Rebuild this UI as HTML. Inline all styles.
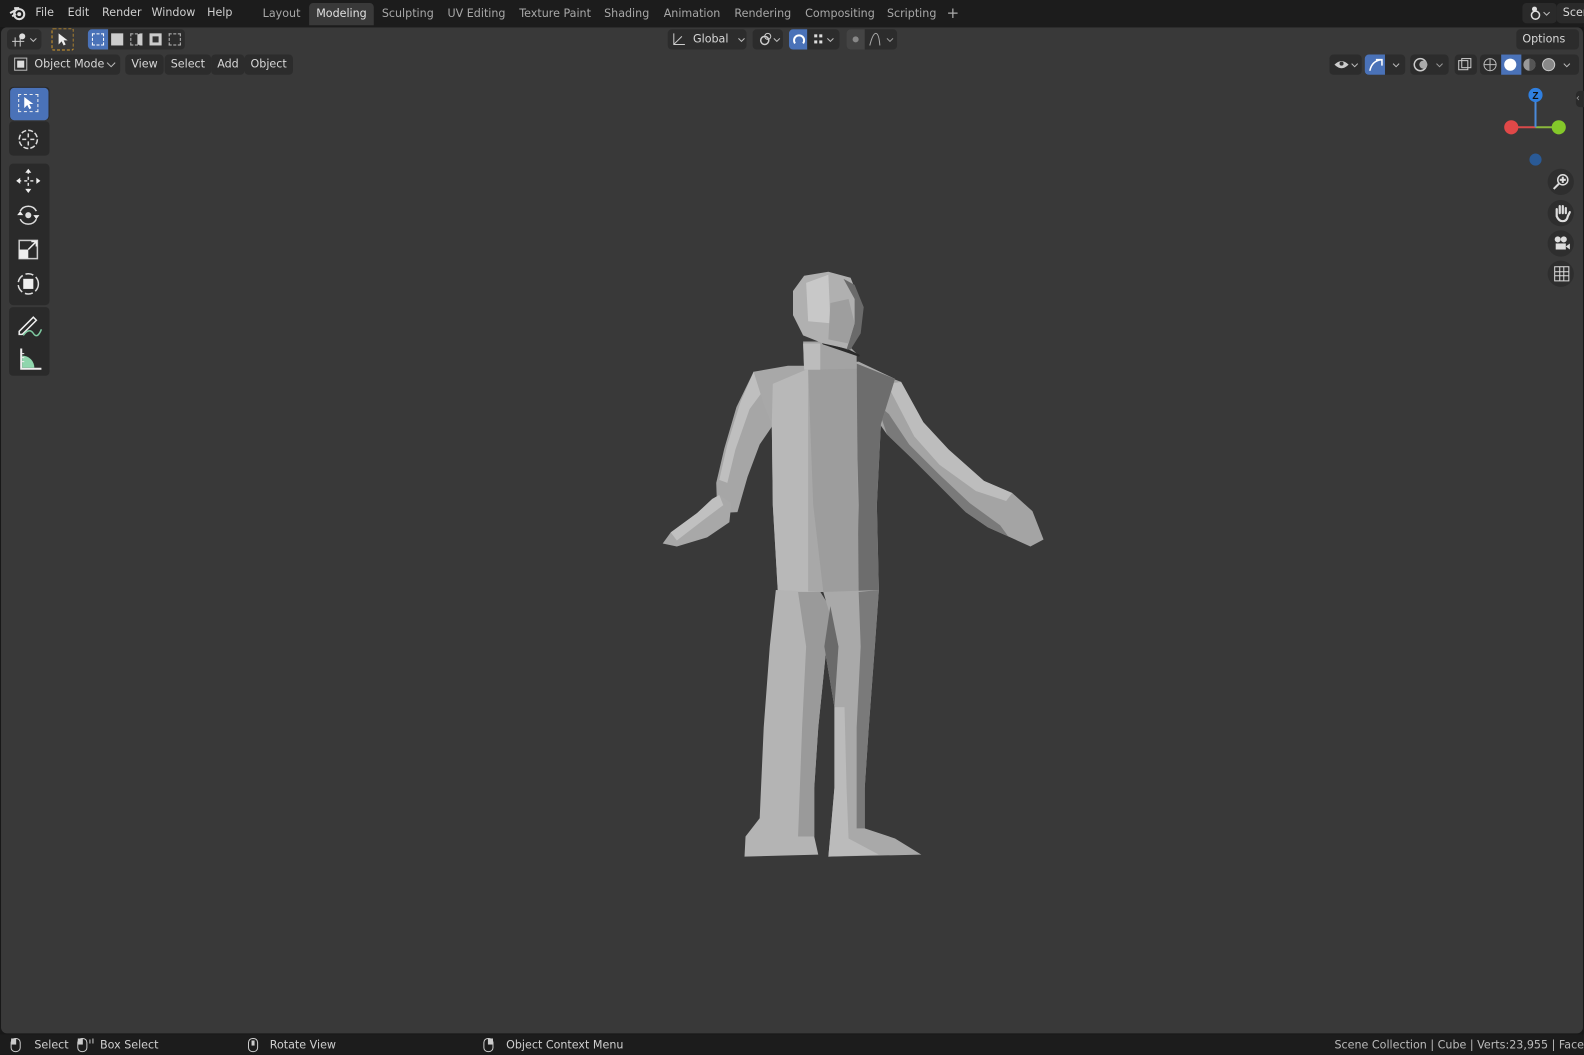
<!DOCTYPE html>
<html><head><meta charset="utf-8"><style>
*{margin:0;padding:0;box-sizing:border-box}
html,body{width:1584px;height:1054px;overflow:hidden;background:#181818}
#w{position:absolute;left:0;top:0;width:1568px;height:1044px;transform:scale(1.0102);transform-origin:0 0;font-family:"DejaVu Sans","Liberation Sans",sans-serif;font-size:11px;color:#cfcfcf}
.a{position:absolute;white-space:nowrap}
#top{left:0;top:0;width:1568px;height:27px;background:#1c1c1c}
#vp{left:1px;top:27px;width:1566px;height:996px;background:#393939;border-radius:6px}
#stat{left:0;top:1024px;width:1568px;height:20px;background:#1c1c1c}
.tab{position:absolute;top:3px;height:22px;line-height:22px;padding:0 7px;color:#a8a8a8;font-size:11px;border-radius:4px 4px 0 0}
.tab.on{background:#393939;color:#e0e0e0}
.btn{position:absolute;height:20px;line-height:20px;background:#2c2c2c;border-radius:4px;color:#d8d8d8;padding:0 6px}
.tb{position:absolute;left:9px;width:40px;background:#2a2a2a;border-radius:4px}
.ti{position:absolute;left:10px;width:38px;height:32px}
.nav{position:absolute;left:1532px;width:26px;height:26px;border-radius:13px;background:#2e2e2e}
</style></head><body><div id="w">
<div class="a" id="vp"></div>
<div class="a" id="top"></div>
<svg class="a" style="left:9px;top:5px" width="18" height="16" viewBox="0 0 18 16"><circle cx="10" cy="9" r="5" fill="none" stroke="#ddd" stroke-width="2"/><circle cx="10" cy="9" r="2" fill="#ddd"/><path d="M1 8 L8 4 M3 11 L7 9 M5 3 L10 3" stroke="#ddd" stroke-width="2"/></svg>
<div class="a" style="left:35px;top:6px">File</div>
<div class="a" style="left:67px;top:6px">Edit</div>
<div class="a" style="left:101px;top:6px">Render</div>
<div class="a" style="left:150px;top:6px">Window</div>
<div class="a" style="left:205px;top:6px">Help</div>
<div class="tab" style="left:253px">Layout</div>
<div class="tab on" style="left:306px">Modeling</div>
<div class="tab" style="left:371px">Sculpting</div>
<div class="tab" style="left:436px">UV Editing</div>
<div class="tab" style="left:507px">Texture Paint</div>
<div class="tab" style="left:591px">Shading</div>
<div class="tab" style="left:650px">Animation</div>
<div class="tab" style="left:720px">Rendering</div>
<div class="tab" style="left:790px">Compositing</div>
<div class="tab" style="left:871px">Scripting</div>
<div class="a" style="left:937px;top:4px;font-size:15px;color:#aaa">+</div>
<div class="btn" style="left:1507px;top:3px;width:34px;background:#2a2a2a"></div>
<svg class="a" style="left:1512px;top:5px" width="24" height="16"><circle cx="8" cy="10" r="4" fill="none" stroke="#ddd" stroke-width="1.5"/><circle cx="7" cy="4" r="2.5" fill="#ddd"/><path d="M16 7l3 3 3-3" stroke="#bbb" fill="none"/></svg>
<div class="btn" style="left:1541px;top:3px;width:30px;background:#2a2a2a">Scen</div>
<div class="btn" style="left:7px;top:29px;width:34px"></div>
<svg class="a" style="left:10px;top:31px" width="30" height="16"><path d="M2 10h12M5 6v9M10 6v9" stroke="#ccc"/><circle cx="12" cy="5" r="3" fill="#ddd"/><path d="M20 7l3 3 3-3" stroke="#bbb" fill="none"/></svg>
<div class="a" style="left:51px;top:28px;width:22px;height:22px;border:1px dashed #d59a2a;border-radius:2px"></div>
<svg class="a" style="left:56px;top:32px" width="12" height="14"><path d="M2 1v11l3-3 2 4 2-1-2-4h4z" fill="#eee"/></svg>
<div class="a" style="left:87px;top:29px;width:96px;height:20px;background:#2c2c2c;border-radius:4px"></div>
<div class="a" style="left:87px;top:29px;width:20px;height:20px;background:#4a72b8;border-radius:4px 0 0 4px"></div>
<div class="a" style="left:91px;top:33px;width:12px;height:12px;border:1px dashed #fff"></div>
<div class="a" style="left:110px;top:33px;width:12px;height:12px;background:#ccc"></div>
<div class="a" style="left:129px;top:33px;width:12px;height:12px;border:1px dashed #bbb;border-right:5px solid #ccc"></div>
<div class="a" style="left:148px;top:33px;width:12px;height:12px;border:3px solid #ccc;background:#333"></div>
<div class="a" style="left:167px;top:33px;width:12px;height:12px;border:1px dashed #bbb"></div>
<div class="btn" style="left:661px;top:29px;width:78px;padding-left:25px">Global</div>
<svg class="a" style="left:664px;top:31px" width="76" height="16"><path d="M3 2v11h11M3 13l8-8" stroke="#ccc" fill="none"/><path d="M67 7l3 3 3-3" stroke="#bbb" fill="none"/></svg>
<div class="btn" style="left:745px;top:29px;width:30px"></div>
<svg class="a" style="left:749px;top:31px" width="26" height="16"><circle cx="8" cy="9" r="4" fill="none" stroke="#ccc" stroke-width="1.5"/><circle cx="11" cy="5" r="3" fill="none" stroke="#ccc"/><path d="M17 7l3 3 3-3" stroke="#bbb" fill="none"/></svg>
<div class="btn" style="left:781px;top:29px;width:50px"></div>
<div class="a" style="left:781px;top:29px;width:18px;height:20px;background:#4a72b8;border-radius:4px 0 0 4px"></div>
<svg class="a" style="left:783px;top:31px" width="48" height="16"><path d="M4 12a5 5 0 1 1 8 0" stroke="#fff" stroke-width="2" fill="none"/><rect x="23" y="3" width="3" height="3" fill="#ddd"/><rect x="28" y="3" width="3" height="3" fill="#ddd"/><rect x="23" y="9" width="3" height="3" fill="#ddd"/><rect x="28" y="9" width="3" height="3" fill="#ddd"/><path d="M36 7l3 3 3-3" stroke="#bbb" fill="none"/></svg>
<div class="btn" style="left:838px;top:29px;width:50px"></div>
<div class="a" style="left:838px;top:29px;width:18px;height:20px;background:#444;border-radius:4px 0 0 4px"></div>
<svg class="a" style="left:840px;top:31px" width="48" height="16"><circle cx="7" cy="8" r="3" fill="#888"/><path d="M21 14q3-12 6-12t4 12" stroke="#aaa" fill="none"/><path d="M38 7l3 3 3-3" stroke="#999" fill="none"/></svg>
<div class="btn" style="left:1501px;top:29px;width:62px">Options ⌄</div>
<div class="btn" style="left:8px;top:54px;width:111px;padding-left:26px">Object Mode</div>
<div class="a" style="left:14px;top:57px;width:13px;height:13px;border:1px solid #bbb"></div><div class="a" style="left:17px;top:60px;width:7px;height:7px;background:#ddd"></div>
<svg class="a" style="left:104px;top:58px" width="12" height="12"><path d="M2 4l4 4 4-4" stroke="#bbb" fill="none"/></svg>
<div class="btn" style="left:124px;top:54px">View</div>
<div class="btn" style="left:163px;top:54px">Select</div>
<div class="btn" style="left:209px;top:54px">Add</div>
<div class="btn" style="left:242px;top:54px">Object</div>
<div class="btn" style="left:1316px;top:54px;width:32px"></div>
<svg class="a" style="left:1320px;top:56px" width="28" height="16"><path d="M1 8q7-7 14 0q-7 7-14 0z" fill="#ccc"/><circle cx="8" cy="7" r="2" fill="#333"/><path d="M18 7l3 3 3-3" stroke="#bbb" fill="none"/></svg>
<div class="btn" style="left:1351px;top:54px;width:40px"></div>
<div class="a" style="left:1351px;top:54px;width:20px;height:20px;background:#4a72b8;border-radius:4px 0 0 4px"></div>
<svg class="a" style="left:1353px;top:56px" width="38" height="16"><path d="M3 14q2-10 12-11M9 3h6v6" stroke="#fff" fill="none" stroke-width="1.5"/><path d="M26 7l3 3 3-3" stroke="#bbb" fill="none"/></svg>
<div class="btn" style="left:1396px;top:54px;width:38px"></div>
<svg class="a" style="left:1398px;top:56px" width="36" height="16"><circle cx="8" cy="8" r="6" fill="none" stroke="#ccc" stroke-width="1.5"/><circle cx="11" cy="8" r="4" fill="#aaa"/><path d="M24 7l3 3 3-3" stroke="#999" fill="none"/></svg>
<div class="btn" style="left:1440px;top:54px;width:22px"></div>
<svg class="a" style="left:1443px;top:57px" width="16" height="14"><rect x="1" y="3" width="9" height="9" fill="none" stroke="#ccc"/><rect x="4" y="1" width="9" height="9" fill="none" stroke="#ccc"/></svg>
<div class="btn" style="left:1465px;top:54px;width:98px"></div>
<div class="a" style="left:1486px;top:54px;width:20px;height:20px;background:#4a72b8"></div>
<svg class="a" style="left:1466px;top:56px" width="98" height="16"><circle cx="9" cy="8" r="6" fill="none" stroke="#bbb"/><path d="M3 8h12M9 2v12" stroke="#bbb"/><circle cx="29" cy="8" r="6" fill="#fff"/><circle cx="48" cy="8" r="6" fill="#999"/><path d="M48 2a6 6 0 0 1 0 12z" fill="#555"/><circle cx="67" cy="8" r="6" fill="#888" stroke="#ccc"/><path d="M82 7l3 3 3-3" stroke="#bbb" fill="none"/></svg>
<div class="tb" style="top:86px;height:33px"></div>
<div class="ti" style="top:87px;background:#4a72b8;border-radius:4px"></div>
<div class="a" style="left:18px;top:93px;width:20px;height:18px;border:1px dashed #eee"></div>
<svg class="a" style="left:22px;top:95px" width="12" height="14"><path d="M2 1v11l3-3 2 4 2-1-2-4h4z" fill="#fff"/></svg>
<div class="tb" style="top:120px;height:34px"></div>
<svg class="a" style="left:16px;top:126px" width="24" height="24"><circle cx="12" cy="12" r="9" fill="none" stroke="#ddd" stroke-width="1.5" stroke-dasharray="5 2"/><path d="M12 6v4M12 14v4M6 12h4M14 12h4" stroke="#ddd" stroke-width="1.5"/></svg>
<div class="tb" style="top:162px;height:140px"></div>
<svg class="a" style="left:15px;top:166px" width="26" height="26"><path d="M13 3v20M3 13h20" stroke="#ddd" stroke-width="1.5" stroke-dasharray="3 3"/><path d="M13 1l-3 4h6zM13 25l-3-4h6zM1 13l4-3v6zM25 13l-4-3v6z" fill="#eee"/></svg>
<svg class="a" style="left:15px;top:200px" width="26" height="26"><path d="M5 9a9 9 0 0 1 16 0M21 17a9 9 0 0 1-16 0" stroke="#ddd" stroke-width="1.5" fill="none"/><circle cx="13" cy="13" r="3" fill="#ddd"/><path d="M2 13l3-4 3 4zM24 13l-3 4-3-4z" fill="#eee"/></svg>
<svg class="a" style="left:15px;top:234px" width="26" height="26"><rect x="4" y="4" width="18" height="18" fill="none" stroke="#ccc" stroke-width="1.5"/><rect x="4" y="13" width="9" height="9" fill="#eee"/><path d="M13 13l8-8M16 5h5v5" stroke="#eee" stroke-width="1.5" fill="none"/></svg>
<svg class="a" style="left:15px;top:268px" width="26" height="26"><circle cx="13" cy="13" r="10" fill="none" stroke="#ddd" stroke-width="1.5" stroke-dasharray="8 3"/><rect x="8" y="8" width="10" height="10" fill="#eee"/></svg>
<div class="tb" style="top:304px;height:68px"></div>
<svg class="a" style="left:15px;top:308px" width="28" height="26"><path d="M4 20L18 6l3 3L7 23H4z" fill="none" stroke="#eee" stroke-width="1.5"/><path d="M8 24q6-8 10-2t8-4" stroke="#7ec9a0" fill="none" stroke-width="1.5"/></svg>
<svg class="a" style="left:15px;top:342px" width="28" height="26"><path d="M6 3v20h20" stroke="#eee" stroke-width="2" fill="none"/><path d="M7 22V10a12 12 0 0 1 12 12z" fill="#8fd6ad"/><path d="M6 8h3M6 12h3M6 16h3" stroke="#eee"/></svg>
<svg class="a" style="left:1480px;top:80px" width="88" height="90"><path d="M16 46h24" stroke="#d94a4a" stroke-width="2"/><path d="M40 46h22" stroke="#8ab83c" stroke-width="2"/><path d="M40 14v32" stroke="#4a8ad9" stroke-width="2"/><circle cx="40" cy="14" r="7" fill="#2f7fe0"/><text x="40" y="18" fill="#111" font-size="10" text-anchor="middle" font-weight="bold" font-family="Liberation Sans">Z</text><circle cx="16" cy="46" r="7" fill="#e04848"/><circle cx="63" cy="46" r="7" fill="#84c82a"/><circle cx="40" cy="78" r="6" fill="#2a5a96"/></svg>
<div class="a" style="left:1560px;top:90px;width:10px;height:16px;background:#2a2a2a;border-radius:4px 0 0 4px;color:#999;font-size:10px;line-height:16px">‹</div>
<div class="nav" style="top:167px"></div><svg class="a" style="left:1536px;top:171px" width="18" height="18"><circle cx="11" cy="7" r="5" fill="none" stroke="#ddd" stroke-width="1.5"/><path d="M11 4v6M8 7h6M7 11l-5 5" stroke="#ddd" stroke-width="2"/></svg>
<div class="nav" style="top:198px"></div><svg class="a" style="left:1537px;top:202px" width="18" height="18"><path d="M4 9V5M7 9V2M10 9V2M13 9V4M4 8v4q2 5 6 5t5-5l2-4" stroke="#ddd" stroke-width="2.2" fill="none" stroke-linecap="round"/></svg>
<div class="nav" style="top:228px"></div><svg class="a" style="left:1537px;top:232px" width="18" height="18"><circle cx="5" cy="5" r="3" fill="#ddd"/><circle cx="11" cy="5" r="3" fill="#ddd"/><rect x="3" y="9" width="10" height="6" fill="#ddd"/><path d="M13 12l4-3v6z" fill="#ddd"/></svg>
<div class="nav" style="top:258px"></div><svg class="a" style="left:1537px;top:262px" width="18" height="18"><path d="M2 2h14v14H2zM2 7h14M2 11h14M7 2v14M11 2v14" stroke="#ddd" fill="none"/></svg>
<svg class="a" style="left:0;top:0" width="1568" height="1044">
<g stroke-linejoin="round">
<polygon points="746,368 772,376 778,402 752,440 740,472 730,507 710,508 709,478 717,444 729,403" fill="#a6a6a6"/>
<polygon points="746,368 733,398 720,440 712,475 720,478 728,445 742,405 762,378" fill="#bfbfbf"/>
<polygon points="712,490 724,498 722,517 700,532 670,541 656,538 664,527 690,508 705,494" fill="#a8a8a8"/>
<polygon points="664,527 690,508 705,494 712,490 716,500 696,515 670,535" fill="#c0c0c0"/>
<polygon points="866,368 892,378 914,418 939,445 974,476 1002,488 1022,506 1033,534 1020,541 998,531 978,522 956,507 931,482 903,454 878,430 864,410" fill="#a4a4a4"/>
<polygon points="878,380 892,378 914,418 939,445 974,476 1002,488 996,496 966,486 930,460 905,432" fill="#bdbdbd"/>
<polygon points="868,400 878,430 903,454 931,482 956,507 978,522 998,531 990,520 960,498 930,470 900,440 880,410" fill="#7a7a7a"/>
<polygon points="746,368 780,362 800,362 850,358 886,375 872,420 868,500 870,584 815,586 770,586 765,500 764,420 756,400" fill="#a8a8a8"/>
<polygon points="765,380 800,365 800,586 770,586 765,500 764,420" fill="#b8b8b8"/>
<polygon points="848,360 886,375 872,420 868,500 870,584 848,586 850,500 848,420" fill="#6d6d6d"/>
<polygon points="800,365 848,360 850,586 815,586 805,500" fill="#9d9d9d"/>
<polygon points="768,584 812,586 822,602 810,720 806,780 806,828 810,846 737,848 738,828 752,810 756,720 762,640" fill="#b4b4b4"/>
<polygon points="790,586 812,586 822,602 810,720 806,780 806,828 790,828 794,720 798,640" fill="#9a9a9a"/>
<polygon points="815,586 870,584 866,640 860,720 856,780 856,820 886,830 912,846 820,848 822,826 826,780 826,700 816,640 822,610" fill="#a9a9a9"/>
<polygon points="850,586 870,584 866,640 860,720 856,780 856,820 848,820 848,720 852,640" fill="#7a7a7a"/>
<polygon points="820,848 822,826 826,780 826,700 836,700 838,780 840,830 870,846" fill="#bbbbbb"/>
<polygon points="822,600 816,640 826,700 830,640" fill="#6a6a6a"/>
<polygon points="795,338 836,338 848,350 848,365 796,366" fill="#a3a3a3"/>
<polygon points="795,340 812,340 812,366 796,366" fill="#bcbcbc"/>
<polygon points="815,340 840,347 850,352" fill="none" stroke="#2a2a2a" stroke-width="2"/>
<polygon points="785,288 796,273 820,269 842,275 852,300 849,330 838,345 815,340 795,332 785,312" fill="#b0b0b0"/>
<polygon points="798,280 820,272 822,320 800,318" fill="#c8c8c8"/>
<polygon points="835,276 846,282 855,304 852,330 842,346 838,346 846,320 846,296" fill="#6a6a6a"/>
<polygon points="822,300 840,296 846,320 840,340 820,336" fill="#9e9e9e"/>
</g>
</svg>
<div class="a" id="stat"></div>
<svg class="a" style="left:10px;top:1027px" width="260" height="16"><rect x="1" y="1" width="9" height="13" rx="4" fill="none" stroke="#ccc"/><rect x="1" y="1" width="5" height="6" fill="#ccc"/><rect x="67" y="1" width="9" height="13" rx="4" fill="none" stroke="#ccc"/><rect x="67" y="1" width="5" height="6" fill="#ccc"/><path d="M79 2v4M82 1v5" stroke="#ccc"/><rect x="236" y="1" width="9" height="13" rx="4" fill="none" stroke="#ccc"/><rect x="239" y="3" width="3" height="5" fill="#ccc"/></svg>
<svg class="a" style="left:478px;top:1027px" width="14" height="16"><rect x="1" y="1" width="9" height="13" rx="4" fill="none" stroke="#ccc"/><rect x="5" y="1" width="5" height="6" fill="#ccc"/></svg>
<div class="a" style="left:34px;top:1028px">Select</div>
<div class="a" style="left:99px;top:1028px">Box Select</div>
<div class="a" style="left:267px;top:1028px">Rotate View</div>
<div class="a" style="left:501px;top:1028px">Object Context Menu</div>
<div class="a" style="left:1321px;top:1028px;color:#bbb">Scene Collection | Cube | Verts:23,955 | Faces:41</div>
</div></body></html>
